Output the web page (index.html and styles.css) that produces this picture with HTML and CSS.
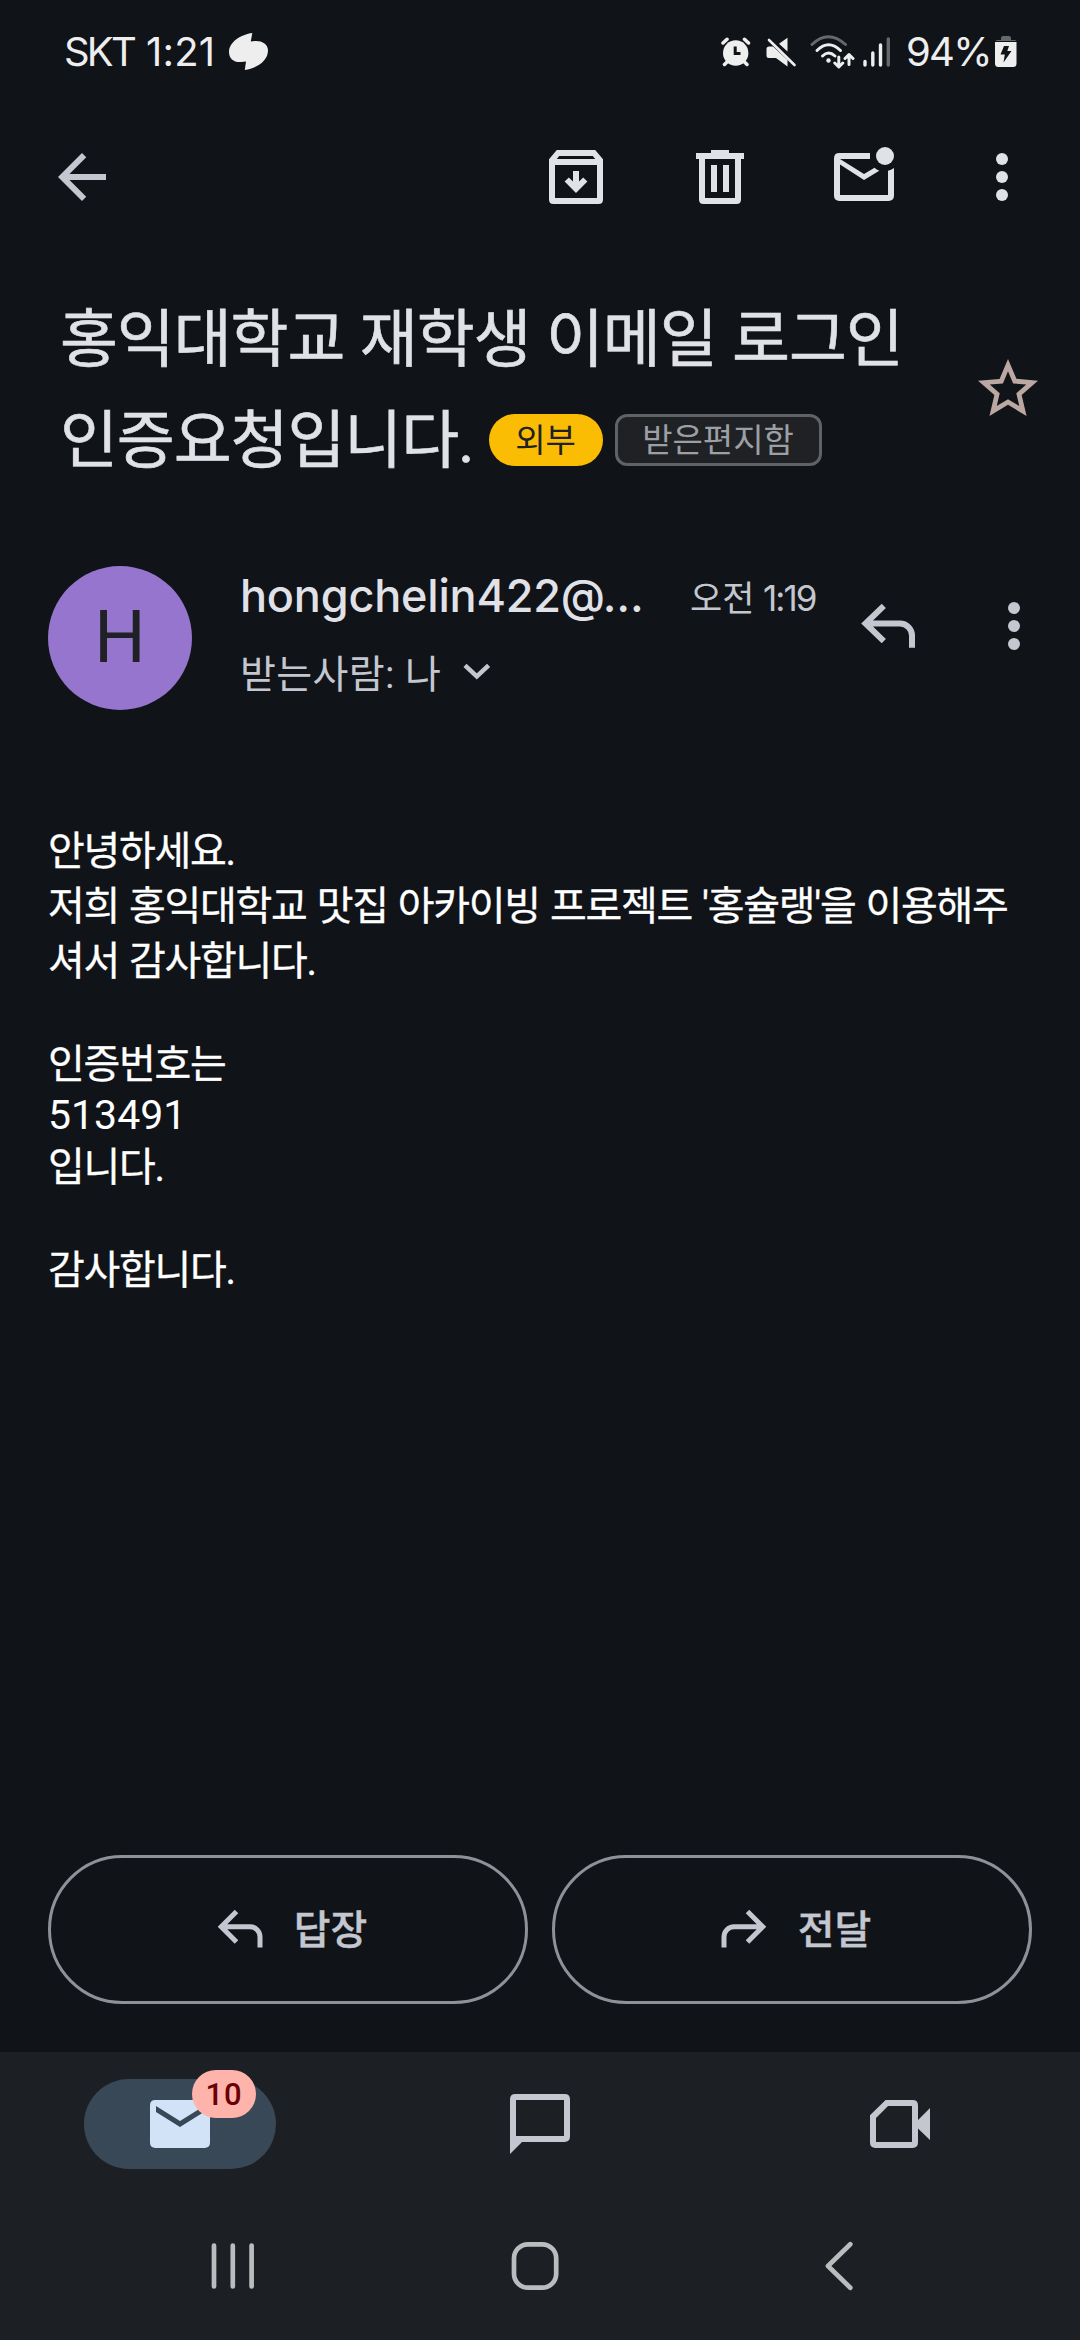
FILE: index.html
```html
<!DOCTYPE html>
<html lang="ko">
<head>
<meta charset="utf-8">
<title>메일</title>
<link rel="stylesheet" href="styles.css">
</head>
<body>
<div class="screen">
  <header class="status">
    <span class="carrier">SKT</span>
    <span class="clock">1:21</span>
    <svg class="blob" width="40" height="38" viewBox="0 0 40 38"><path d="M23.3 0C12 1.500 0 9 0 19C0 26 5 29.500 12 29L17 28.600L15.800 37C28 35 39 28 39 17.500C39 11 33 7.600 26 8L21.800 8.500Z"/></svg>
    <div class="indicators">
      <svg class="alarm" width="30" height="30" viewBox="0 0 30 30"><circle cx="14.700" cy="16" r="12.700"/><path class="line" d="M2 6L6 2.300M27.500 6L23.500 2.300M6 25L3.500 27.500M23.500 25L26 27.500"/><path class="cut" d="M14.200 9.500V16.500H19.500"/></svg>
      <svg class="mute" width="31" height="30" viewBox="0 0 31 30"><path d="M0.500 12Q0.500 9.500 3 9.500H7L21.500 23V29.500L10 21H3Q0.500 21 0.500 18.500ZM21.500 0.800V14.500L13 6.700Z"/><path class="line thin" d="M3 3L28.500 28"/></svg>
      <svg class="wifi" width="45" height="34" viewBox="0 0 45 34"><path class="arc dim" d="M2 9.500Q18 -6 35.500 9.500"/><path class="arc" d="M7 15.500Q18.500 4 30.500 15.500M12.500 21Q18.500 15 25 21"/><circle cx="18.500" cy="25.500" r="2.200"/><path class="arrows" d="M28.800 22V31.500M24.800 28L28.800 32L32.800 28M39 29.500V20M35 23.500L39 19.500L43 23.500"/></svg>
      <svg class="signal" width="28" height="30" viewBox="0 0 28 30"><path class="bars" d="M2 24.500V28M9.800 16V28M17.500 8V28"/><path class="bars dim" d="M25.300 2V28"/></svg>
      <span class="percent">94%</span>
      <svg class="battery" width="22" height="32" viewBox="0 0 22 32"><path class="cap" d="M0.500 5Q1 4 3 4H6V2Q6 0 8 0H14Q16 0 16 2V4H19Q21 4 21.500 5Z"/><path d="M0 6H21.500V27.500Q21.500 31 18 31H3.500Q0 31 0 27.500Z"/><path class="bolt" d="M9 10H14L12.300 15H16.500L8.500 26.500L9.800 18.500H5.500Z"/></svg>
    </div>
  </header>

  <nav class="toolbar">
    <svg class="icon back" viewBox="0 0 24 24"><path d="M20 11H7.830L13.420 5.410L12 4L4 12L12 20L13.410 18.590L7.830 13H20Z"/></svg>
    <svg class="icon" viewBox="0 0 24 24"><path fill-rule="evenodd" d="M5.600 3H18.400L21 6.100V19.500Q21 21 19.500 21H4.500Q3 21 3 19.500V6.100ZM6.400 5L5.600 6H18.400L17.600 5ZM5 8V19H19V8Z"/><path d="M11 10H13V13.500L14.400 12.200L15.800 13.500L12 17.300L8.200 13.500L9.600 12.200L11 13.500Z"/></svg>
    <svg class="icon" viewBox="0 0 24 24"><path fill-rule="evenodd" d="M9 3H15V4H20V6H19V19.500Q19 21 17.500 21H6.500Q5 21 5 19.500V6H4V4H9ZM7 6V19H17V6ZM9 8H11V17H9ZM13 8H15V17H13Z"/></svg>
    <svg class="icon" viewBox="0 0 24 24"><circle cx="19" cy="5" r="3"/><path fill-rule="evenodd" d="M14 4H3.800Q2 4 2 5.800V18.200Q2 20 3.800 20H20.200Q22 20 22 18.200V9Q21 9.700 20 9.900V18H4V7.800L12 13L17.100 9.900Q16.200 9.500 15.500 8.900L12 11L4 6H14Z"/></svg>
    <svg class="icon overflow" viewBox="0 0 24 24"><circle cx="12" cy="6" r="2"/><circle cx="12" cy="12" r="2"/><circle cx="12" cy="18" r="2"/></svg>
  </nav>

  <section class="subject">
    <div class="subject-text">
      <div class="subject-line">홍익대학교 재학생 이메일 로그인</div>
      <div class="subject-line">인증요청입니다.<span class="chip external">외부</span><span class="chip label">받은편지함</span></div>
    </div>
    <svg class="icon star" viewBox="0 0 24 24"><path d="M22 9.240l-7.190-.62L12 2 9.190 8.630 2 9.240l5.460 4.730L5.820 21 12 17.270 18.180 21l-1.630-7.030L22 9.240zM12 15.400l-3.760 2.270 1-4.280-3.320-2.880 4.380-.38L12 6.100l1.710 4.040 4.380.38-3.320 2.880 1 4.280L12 15.400z"/></svg>
  </section>

  <section class="sender">
    <div class="avatar">H</div>
    <div class="who">
      <div class="who-top"><span class="name">hongchelin422@…</span><span class="time">오전 <span class="time-num">1:19</span></span></div>
      <div class="to">받는사람: 나<svg class="chevron" width="28" height="17" viewBox="0 0 28 17"><path d="M2 2.300L13.800 13.500L25.600 2.300"/></svg></div>
    </div>
    <svg class="icon reply" viewBox="0 0 24 24"><path class="bend" d="M10.600 3.600L4.500 9.500L10.600 15.400M4.500 9.500H16a4 4 0 0 1 4 4V17.600"/></svg>
    <svg class="icon more" viewBox="0 0 24 24"><circle cx="12" cy="6" r="2"/><circle cx="12" cy="12" r="2"/><circle cx="12" cy="18" r="2"/></svg>
  </section>

  <main class="message">
    <p>안녕하세요.</p>
    <p class="long">저희 홍익대학교 맛집 아카이빙 프로젝트 '홍슐랭'을 이용해주</p>
    <p>셔서 감사합니다.</p>
    <p class="short"></p>
    <p>인증번호는</p>
    <p class="short code">513491</p>
    <p>입니다.</p>
    <p class="short"></p>
    <p>감사합니다.</p>
  </main>

  <div class="actions">
    <div class="action"><svg class="small-icon" viewBox="0 0 24 24"><path class="bend" d="M10.600 4.600L4.500 10.700L10.600 16.800M4.500 10.700H16a4 4 0 0 1 4 4V19"/></svg><span>답장</span></div>
    <div class="action"><svg class="small-icon" viewBox="0 0 24 24"><path class="bend" d="M13.400 4.600L19.500 10.700L13.400 16.800M19.500 10.700H8a4 4 0 0 0 -4 4V19"/></svg><span>전달</span></div>
  </div>

  <footer class="bottom">
    <div class="tabs">
      <div class="tab"><div class="pill"><svg class="icon" viewBox="0 0 24 24"><path d="M3.800 4H20.200Q22 4 22 5.800V18.200Q22 20 20.200 20H3.800Q2 20 2 18.200V5.800Q2 4 3.800 4Z"/><path class="flap" d="M4 6L12 11L20 6V8L12 13L4 8Z"/></svg><span class="badge">10</span></div></div>
      <div class="tab"><svg class="icon chat" viewBox="0 0 24 24"><path fill-rule="evenodd" d="M3.800 2H20.200Q22 2 22 3.800V16.200Q22 18 20.200 18H6L2 22V3.800Q2 2 3.800 2ZM4 4V16H20V4Z"/></svg></div>
      <div class="tab"><svg class="icon" viewBox="0 0 24 24"><path fill-rule="evenodd" d="M7.200 4H16.200Q18 4 18 5.800V10.700L22 6.700V17.300L18 13.500V18.200Q18 20 16.200 20H3.800Q2 20 2 18.200V9.100ZM8 6L4 10V18H16V6Z"/></svg></div>
    </div>
    <div class="system">
      <svg class="recents" width="44" height="48" viewBox="0 0 44 48"><path d="M3 3.500V44.500M21.800 3.500V44.500M40.600 3.500V44.500"/></svg>
      <svg class="home" width="48" height="50" viewBox="0 0 48 50"><rect x="3" y="3.300" width="42.200" height="43.400" rx="14"/></svg>
      <svg class="prev" width="28" height="50" viewBox="0 0 28 50"><path d="M25.300 3.200L3 25L25.300 46.800"/></svg>
    </div>
  </footer>
</div>
</body>
</html>
```
FILE: styles.css
```css
* { box-sizing: border-box; }

body {
  margin: 0;
  background: #101318;
  color: #e1e2e8;
  font-family: Roboto, "Noto Sans CJK KR", sans-serif;
}

.screen {
  width: 1080px;
  height: 2340px;
  display: flex;
  flex-direction: column;
  overflow: hidden;
}

.icon {
  width: 72px;
  height: 72px;
  flex: none;
  fill: currentColor;
}

/* Status bar */
.status {
  height: 104px;
  display: flex;
  align-items: center;
  padding: 0 63px 0 64px;
  color: #eee;
  font-family: Inter, sans-serif;
  font-size: 40px;
  line-height: 50px;
  white-space: nowrap;
}
.status svg { fill: currentColor; flex: none; }
.carrier { width: 82px; letter-spacing: -2.800px; }
.clock { width: 83px; letter-spacing: 0.200px; }
.indicators {
  display: flex;
  align-items: center;
  margin-left: auto;
}
.alarm { margin-right: 15px; }
.alarm .line { fill: none; stroke: #eee; stroke-width: 3.500; stroke-linecap: round; }
.alarm .cut { fill: none; stroke: #101318; stroke-width: 3; }
.mute { margin-right: 13px; }
.mute .line { fill: none; stroke: #eee; stroke-width: 2.600; stroke-linecap: round; }
.wifi { margin-right: 8px; }
.wifi .arc { fill: none; stroke: #eee; stroke-width: 3; stroke-linecap: round; }
.wifi .arrows { fill: none; stroke: #eee; stroke-width: 3; stroke-linecap: round; stroke-linejoin: round; }
.signal { margin-right: 15px; }
.signal .bars { stroke: #eee; stroke-width: 3.400; stroke-linecap: round; }
.status .dim { stroke: #66686b; }
.wifi .arc.dim, .signal .bars.dim { stroke: #66686b; }
.percent { width: 89px; letter-spacing: -1.700px; }
.battery .cap { fill: #66686b; }
.battery .bolt { fill: #101318; }

/* Mail toolbar */
.toolbar {
  height: 146px;
  display: flex;
  align-items: center;
  gap: 72px;
  padding: 0 42px 0 46px;
}
.back { margin-right: auto; color: #c4c7cf; }
.overflow { margin-left: -6px; }

/* Subject */
.subject {
  display: flex;
  justify-content: space-between;
  padding: 33px 36px 0 60px;
  height: 298px;
}
.subject-line {
  display: flex;
  align-items: center;
  height: 101px;
  font-size: 63px;
  letter-spacing: -1.100px;
  word-spacing: 1px;
  -webkit-text-stroke: 0.600px currentColor;
  white-space: nowrap;
}
.star { margin-top: 70px; color: #bca8a2; }
.chip {
  display: flex;
  align-items: center;
  justify-content: center;
  height: 52px;
  margin-top: 10px;
  padding-bottom: 3px;
  font-size: 33px;
  letter-spacing: 0;
  -webkit-text-stroke: 0;
}
.external {
  width: 114px;
  margin-left: 15px;
  border-radius: 26px;
  background: #fbbc04;
  color: #202124;
}
.label {
  width: 207px;
  margin-left: 12px;
  border: 3px solid #5f6368;
  border-radius: 12px;
  background: #202124;
  color: #9aa0a6;
}

/* Sender */
.sender {
  display: flex;
  height: 254px;
  padding: 18px 30px 0 48px;
  color: #c4c7cf;
}
.avatar {
  width: 144px;
  height: 144px;
  border-radius: 50%;
  background: #9575cd;
  color: #202124;
  font-size: 72px;
  line-height: 144px;
  text-align: center;
}
.who { width: 612px; margin-left: 48px; white-space: nowrap; }
.who-top {
  display: flex;
  height: 58px;
  align-items: center;
  justify-content: space-between;
}
.name { color: #e1e2e8; font-family: Inter, sans-serif; font-weight: 500; font-size: 45px; letter-spacing: -0.200px; }
.time { width: 162px; font-size: 35px; }
.time-num { font-family: Inter, sans-serif; letter-spacing: -2px; }
.to { display: flex; align-items: center; height: 94px; font-size: 39px; letter-spacing: 0.400px; }
.chevron { margin-left: 22px; }
.chevron path { fill: none; stroke: currentColor; stroke-width: 4.500; }
.reply { margin-top: 29px; }
.more { margin-top: 24px; margin-left: 54px; }
.bend { fill: none; stroke: currentColor; stroke-width: 2; }

/* Message */
.message {
  height: 1053px;
  padding: 21.500px 48px 0;
  color: #fff;
  font-size: 40px;
  letter-spacing: -1.300px;
  word-spacing: 1.500px;
  -webkit-text-stroke: 0.300px currentColor;
}
.message p { margin: 0; height: 55px; line-height: 55px; white-space: nowrap; }
.message .short { height: 48.200px; line-height: 46px; }
.message .code { font-size: 41px; letter-spacing: 0; -webkit-text-stroke: 0; }

/* Reply and forward */
.actions {
  display: flex;
  gap: 24px;
  height: 197px;
  padding: 0 48px;
}
.action {
  flex: 1;
  height: 149px;
  display: flex;
  align-items: center;
  justify-content: center;
  gap: 24px;
  padding-left: 1px;
  border: 3px solid #8e9197;
  border-radius: 75px;
  color: #c4c7cf;
  font-size: 40px;
  font-weight: 500;
  -webkit-text-stroke: 0.400px currentColor;
}
.action span { padding-bottom: 5px; }
.small-icon { width: 60px; height: 60px; }

/* Bottom bars */
.bottom { flex: 1; background: #1c1f23; }
.tabs { display: flex; padding-top: 27px; height: 144px; }
.tab { flex: 1; display: flex; justify-content: center; color: #c4c7cf; height: 90px; align-items: center; }
.pill {
  position: relative;
  display: flex;
  align-items: center;
  justify-content: center;
  width: 192px;
  height: 90px;
  border-radius: 45px;
  background: #394857;
  color: #d3e3f7;
}
.flap { fill: #394857; }
.badge {
  position: absolute;
  left: 108px;
  top: -9px;
  width: 64px;
  height: 48px;
  border-radius: 24px;
  background: #ffb4ab;
  color: #690005;
  font-size: 31px;
  font-weight: 500;
  line-height: 49px;
  letter-spacing: 1px;
  text-align: center;
}
.system {
  display: flex;
  align-items: center;
  height: 140px;
  padding-left: 211px;
}
.home { margin: 0 266px 0 256px; }
.system path, .system rect { fill: none; stroke: #bbbcbe; stroke-width: 4.700; stroke-linecap: round; stroke-linejoin: round; }
```
